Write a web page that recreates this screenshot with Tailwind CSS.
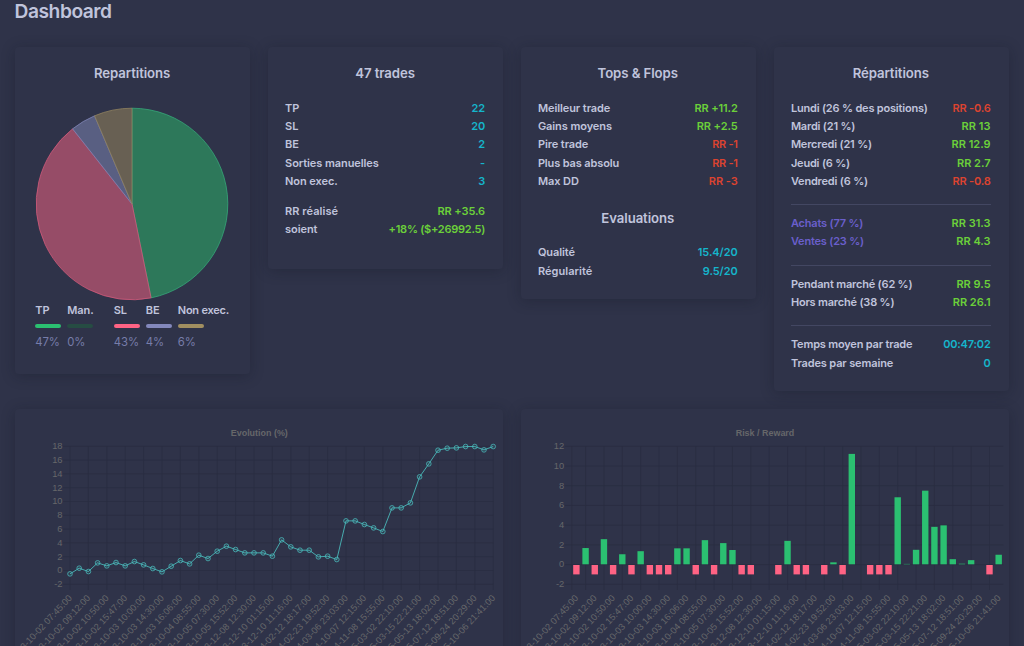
<!DOCTYPE html>
<html lang="fr">
<head>
<meta charset="utf-8">
<title>Dashboard</title>
<script src="https://cdn.jsdelivr.net/npm/@tailwindcss/browser@4"></script>
</head>
<body class="h-[646px] w-[1024px] overflow-hidden bg-[#2f3349] px-[14.6px] font-[Inter,sans-serif] text-[11px] leading-[18.2px] font-[560] tracking-[-0.08px] text-[#c0c4dc] [font-feature-settings:'calt'_0]">
<h1 class="h-[47px] pt-[1px] text-[19.2px] leading-[20px] tracking-[-0.47px]">Dashboard</h1>
<main class="flex flex-col gap-[18px]">
  <section class="flex h-[344px] shrink-0 items-start gap-[18px] [&_h2]:text-center [&_h2]:text-[13.2px] [&_h2]:leading-[20px] [&_h2]:tracking-[-0.08px]">
    <article class="h-[327px] w-[235px] shrink-0 rounded-[4px] px-[17.3px] pt-[16.4px] shadow-[0_2px_14px_rgba(15,20,34,0.3)]">
      <h2>Repartitions</h2>
      <svg id="pie" class="mx-auto mt-[23px] block" width="196" height="196" viewBox="-98 -98 196 196"></svg>
      <div class="-mt-[1px] ml-[3.4px] flex whitespace-nowrap">
        <div class="w-[32px]"><p>TP</p><div class="mt-[4.5px] h-[4px] w-[26px] rounded-full bg-[#2bc071]"></div><p class="mt-[4.5px] text-[11.3px] font-normal text-[#777da9]">47%</p></div>
        <div class="w-[46.5px]"><p>Man.</p><div class="mt-[4.5px] h-[4px] w-[26px] rounded-full bg-[#264c43]"></div><p class="mt-[4.5px] text-[11.3px] font-normal text-[#777da9]">0%</p></div>
        <div class="w-[32px]"><p>SL</p><div class="mt-[4.5px] h-[4px] w-[26px] rounded-full bg-[#ff6384]"></div><p class="mt-[4.5px] text-[11.3px] font-normal text-[#777da9]">43%</p></div>
        <div class="w-[32px]"><p>BE</p><div class="mt-[4.5px] h-[4px] w-[26px] rounded-full bg-[#8388bc]"></div><p class="mt-[4.5px] text-[11.3px] font-normal text-[#777da9]">4%</p></div>
        <div><p class="tracking-[-0.23px]">Non exec.</p><div class="mt-[4.5px] h-[4px] w-[26px] rounded-full bg-[#a18f60]"></div><p class="mt-[4.5px] text-[11.3px] font-normal text-[#777da9]">6%</p></div>
      </div>
    </article>
    <article class="h-[222px] w-[235px] shrink-0 rounded-[4px] px-[17.5px] pt-[16.4px] shadow-[0_2px_14px_rgba(15,20,34,0.3)]">
      <h2 class="mb-[15.6px]">47 trades</h2>
      <div class="flex justify-between"><span>TP</span><span class="text-[#15b5cb]">22</span></div>
      <div class="flex justify-between"><span>SL</span><span class="text-[#15b5cb]">20</span></div>
      <div class="flex justify-between"><span>BE</span><span class="text-[#15b5cb]">2</span></div>
      <div class="flex justify-between"><span>Sorties manuelles</span><span class="text-[#15b5cb]">-</span></div>
      <div class="flex justify-between"><span>Non exec.</span><span class="text-[#15b5cb]">3</span></div>
      <div class="mt-3 flex justify-between"><span class="tracking-[0.05px]">RR réalisé</span><span class="text-[#6bd03a]">RR +35.6</span></div>
      <div class="flex justify-between"><span>soient</span><span class="tracking-[-0.25px] text-[#6bd03a]">+18% ($+26992.5)</span></div>
    </article>
    <article class="h-[251.5px] w-[235px] shrink-0 rounded-[4px] pr-[18px] pl-[17.3px] pt-[16.4px] shadow-[0_2px_14px_rgba(15,20,34,0.3)]">
      <h2 class="mb-[15.6px]">Tops &amp; Flops</h2>
      <div class="flex justify-between"><span>Meilleur trade</span><span class="tracking-[-0.15px] text-[#6bd03a]">RR +11.2</span></div>
      <div class="flex justify-between"><span>Gains moyens</span><span class="text-[#6bd03a]">RR +2.5</span></div>
      <div class="flex justify-between"><span>Pire trade</span><span class="tracking-[-0.3px] text-[#dc4330]">RR -1</span></div>
      <div class="flex justify-between"><span class="tracking-[-0.13px]">Plus bas absolu</span><span class="tracking-[-0.3px] text-[#dc4330]">RR -1</span></div>
      <div class="flex justify-between"><span>Max DD</span><span class="text-[#dc4330]">RR -3</span></div>
      <h2 class="mt-[18px] mb-[15.4px]">Evaluations</h2>
      <div class="flex justify-between"><span>Qualité</span><span class="text-[#15b5cb]">15.4/20</span></div>
      <div class="flex justify-between"><span class="tracking-[0.05px]">Régularité</span><span class="text-[#15b5cb]">9.5/20</span></div>
    </article>
    <article class="h-[344px] w-[235px] shrink-0 rounded-[4px] pr-[18px] pl-[17.3px] pt-[16.4px] tracking-[-0.19px] shadow-[0_2px_14px_rgba(15,20,34,0.3)]">
      <h2 class="mb-[15.6px]">Répartitions</h2>
      <div class="flex justify-between"><span>Lundi (26 % des positions)</span><span class="text-[#dc4330]">RR -0.6</span></div>
      <div class="flex justify-between"><span>Mardi (21 %)</span><span class="tracking-[0.05px] text-[#6bd03a]">RR 13</span></div>
      <div class="flex justify-between"><span>Mercredi (21 %)</span><span class="tracking-normal text-[#6bd03a]">RR 12.9</span></div>
      <div class="flex justify-between"><span>Jeudi (6 %)</span><span class="tracking-normal text-[#6bd03a]">RR 2.7</span></div>
      <div class="flex justify-between"><span>Vendredi (6 %)</span><span class="text-[#dc4330]">RR -0.8</span></div>
      <div class="mt-[14px] mb-[9.2px] h-px bg-[#434762]"></div>
      <div class="flex justify-between"><span class="text-[#6a5fcb]">Achats (77 %)</span><span class="tracking-normal text-[#6bd03a]">RR 31.3</span></div>
      <div class="flex justify-between"><span class="text-[#6a5fcb]">Ventes (23 %)</span><span class="tracking-normal text-[#6bd03a]">RR 4.3</span></div>
      <div class="mt-[14px] mb-[9.2px] h-px bg-[#434762]"></div>
      <div class="flex justify-between"><span>Pendant marché (62 %)</span><span class="tracking-normal text-[#6bd03a]">RR 9.5</span></div>
      <div class="flex justify-between"><span>Hors marché (38 %)</span><span class="tracking-normal text-[#6bd03a]">RR 26.1</span></div>
      <div class="mt-[14px] mb-[9.2px] h-px bg-[#434762]"></div>
      <div class="flex justify-between"><span>Temps moyen par trade</span><span class="text-[#15b5cb]">00:47:02</span></div>
      <div class="flex justify-between"><span class="tracking-[-0.14px]">Trades par semaine</span><span class="text-[#15b5cb]">0</span></div>
    </article>
  </section>
  <section class="flex h-[237px] shrink-0 gap-[18px] tracking-normal">
    <article class="h-[300px] w-[488px] shrink-0 rounded-[4px] shadow-[0_2px_14px_rgba(15,20,34,0.3)]"><svg id="line" class="block font-['Liberation_Sans',sans-serif]" width="488" height="237" viewBox="14.6 409 488 237" font-size="9.3" font-weight="400"></svg></article>
    <article class="h-[300px] w-[488px] shrink-0 rounded-[4px] shadow-[0_2px_14px_rgba(15,20,34,0.3)]"><svg id="bars" class="block font-['Liberation_Sans',sans-serif]" width="488" height="237" viewBox="520.6 409 488 237" font-size="9.3" font-weight="400"></svg></article>
  </section>
</main>
<script>
const GREY = '#666769', GRID = '#292d41';
const dates = ['2023-10-02 07:45:00','2023-10-02 09:12:00','2023-10-02 10:50:00','2023-10-02 15:47:00','2023-10-03 10:00:00','2023-10-03 14:30:00','2023-10-03 16:06:00','2023-10-04 08:55:00','2023-10-05 07:30:00','2023-10-05 15:52:00','2023-12-08 12:30:00','2023-12-10 01:15:00','2023-12-10 11:16:00','2024-02-12 18:17:00','2024-02-23 19:52:00','2024-03-06 23:03:00','2024-10-07 12:15:00','2024-11-08 15:55:00','2025-03-02 22:10:00','2025-03-15 22:21:00','2025-05-13 18:02:00','2025-07-12 18:51:00','2025-09-24 20:29:00','2025-10-06 21:41:00'];
const vline = x => `<path d="M${x} 446V590" stroke="${GRID}" stroke-width="0.8"/>`;
const label = (x, i) => `<text transform="translate(${x + 2.5} 598.5) rotate(-47)" text-anchor="end" fill="${GREY}">${dates[i]}</text>`;
function axis(x0, x1, max, title, cx) {
  let s = `<text x="${cx}" y="436.3" text-anchor="middle" font-size="8.95" font-weight="700" fill="${GREY}">${title}</text>`;
  for (let v = max; v >= -2; v -= 2) {
    const y = 446.3 + (max - v) * 138 / (max + 2);
    s += `<path d="M${x0 - 7} ${y}H${x1}" stroke="${GRID}" stroke-width="0.8"/><text x="${x0 - 7.5}" y="${y + 2.8}" text-anchor="end" fill="${GREY}">${v}</text>`;
  }
  return s;
}
// Cumulative performance
const ys = [521,504,514,488,497,487,497,484,494,505,515,498,481,491,465,475,453,438,448,458,458,458,468,419,440,450,450,470,468,478,362,362,373,383,394,323,323,308,230,191,150,144,143,139,139,149,139];
let s = axis(69.6, 493, 18, 'Evolution (%)', 258.9);
for (let i = 0; i < 24; i++) { const x = 69.6 + i * 18.4; s += vline(x) + label(x, i); }
const pts = ys.map((y, i) => [69.6 + i * 9.2, 400.2 + y / 3]);
s += `<polyline points="${pts.join(' ')}" fill="none" stroke="#4bc0c0" stroke-opacity=".85" stroke-width="1"/>`;
s += pts.map(p => `<circle cx="${p[0]}" cy="${p[1]}" r="2.35" fill="#4bc0c0" fill-opacity=".1" stroke="#4bc0c0" stroke-opacity=".9" stroke-width=".8"/>`).join('');
document.getElementById('line').innerHTML = s;
// Risk / reward of each trade
const rr = [-1,1.65,-1,2.55,-1,1.02,-1,1.33,-1,-1,-1,1.62,1.62,-1,2.45,-1,2.15,1.45,-1,-1,0,0,-1,2.38,-1,-1,0,-1,.2,-1,11.2,0,-1,-1,-1,6.8,.04,1.47,7.47,3.8,3.95,.52,.06,.42,0,-1,.97];
s = axis(571.3, 1002.9, 12, 'Risk / Reward', 764.6) + vline(571.5);
for (let i = 0; i < 24; i++) { const x = 576 + i * 18.36; s += (i < 23 ? vline(x + 9.18) : '') + label(x, i); }
rr.forEach((v, i) => {
  if (!v) return;
  const x = 576 + i * 9.18 - 3.2, h = Math.abs(v) * 9.857;
  s += v > 0 ? `<rect x="${x}" y="${564.3 - h}" width="6.4" height="${h}" fill="#2bc071"/>` : `<rect x="${x}" y="565" width="6.4" height="9.4" fill="#ff6384"/>`;
});
document.getElementById('bars').innerHTML = s;
// Trade outcomes
let a = 0, p = '';
[[22,'#2d785a','#36a779'],[20,'#964c67','#cf5b7b'],[2,'#595f82','#7f84b5'],[3,'#686053','#8f8260']].forEach(([n, f, k]) => {
  const b = a + n / 47 * 2 * Math.PI, r = 95.8;
  p += `<path d="M0 0L${r * Math.sin(a)} ${-r * Math.cos(a)}A${r} ${r} 0 0 1 ${r * Math.sin(b)} ${-r * Math.cos(b)}Z" fill="${f}" stroke="${k}" stroke-width=".8"/>`;
  a = b;
});
document.getElementById('pie').innerHTML = p;
</script>
</body>
</html>
